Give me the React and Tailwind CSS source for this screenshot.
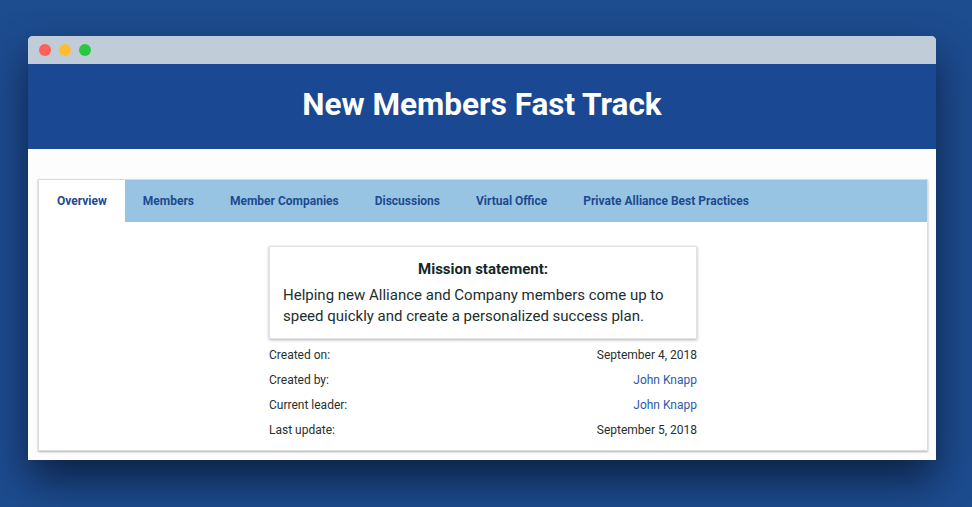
import React from 'react'

const tabs = ['Overview', 'Members', 'Member Companies', 'Discussions', 'Virtual Office', 'Private Alliance Best Practices']

const details = [
  { label: 'Created on:', value: 'September 4, 2018' },
  { label: 'Created by:', value: 'John Knapp', link: true },
  { label: 'Current leader:', value: 'John Knapp', link: true },
  { label: 'Last update:', value: 'September 5, 2018' },
]

export default function App() {
  return (
    <div className="h-[507px] w-[972px] overflow-hidden bg-[#1d4c8f] pt-[36px] pl-[28px] font-['Roboto',sans-serif]">
      <div className="w-[908px] overflow-hidden rounded-t-[5px] bg-white shadow-[0_20px_40px_rgba(8,20,45,0.75)]">
        {/* title bar */}
        <div className="flex h-[28px] items-center gap-[8px] bg-[#c0cdd9] pl-[11px]">
          <span className="h-[12px] w-[12px] rounded-full bg-[#fe5f57]" />
          <span className="h-[12px] w-[12px] rounded-full bg-[#febc2e]" />
          <span className="h-[12px] w-[12px] rounded-full bg-[#28c840]" />
        </div>

        <div className="flex h-[85px] items-center justify-center bg-[#1b4892] pb-[3px]">
          <h1 className="text-[31.5px] font-bold text-white">New Members Fast Track</h1>
        </div>

        <div className="bg-[#fdfdfd] pl-[10px] pr-[8px] pt-[30px] pb-[9px]">
          <div className="border border-[#dcdcdc] bg-white shadow-[0_1px_2px_rgba(0,0,0,0.3)]">
            <div className="flex h-[42px] bg-[#98c4e3]">
              {tabs.map((t, i) => (
                <div
                  key={t}
                  className={
                    'flex items-center px-[18px] pb-[1px] text-[12px] font-bold text-[#1d4a90] ' +
                    (i === 0 ? 'bg-white' : '')
                  }
                >
                  {t}
                </div>
              ))}
            </div>

            <div className="flex justify-center pt-[24px] pb-[8px]">
              <div className="w-[428px]">
                <div className="border border-[#e2e2e2] bg-white px-[13px] pt-[12px] pb-[11px] shadow-[0_1px_3px_rgba(0,0,0,0.3)]">
                  <div className="text-center text-[15px] leading-[20px] font-bold text-[#142828]">Mission statement:</div>
                  <p className="mt-[6px] text-[15px] leading-[21px] text-[#1c2e2e]">
                    Helping new Alliance and Company members come up to speed quickly and create a personalized success plan.
                  </p>
                </div>
                <div className="pt-[3px]">
                  {details.map((d) => (
                    <div key={d.label} className="flex h-[25px] items-center justify-between text-[12px]">
                      <span className="text-[#1f3030]">{d.label}</span>
                      <span className={d.link ? 'text-[#2d5aa6]' : 'text-[#1f3030]'}>{d.value}</span>
                    </div>
                  ))}
                </div>
              </div>
            </div>
          </div>
        </div>
      </div>
    </div>
  )
}
